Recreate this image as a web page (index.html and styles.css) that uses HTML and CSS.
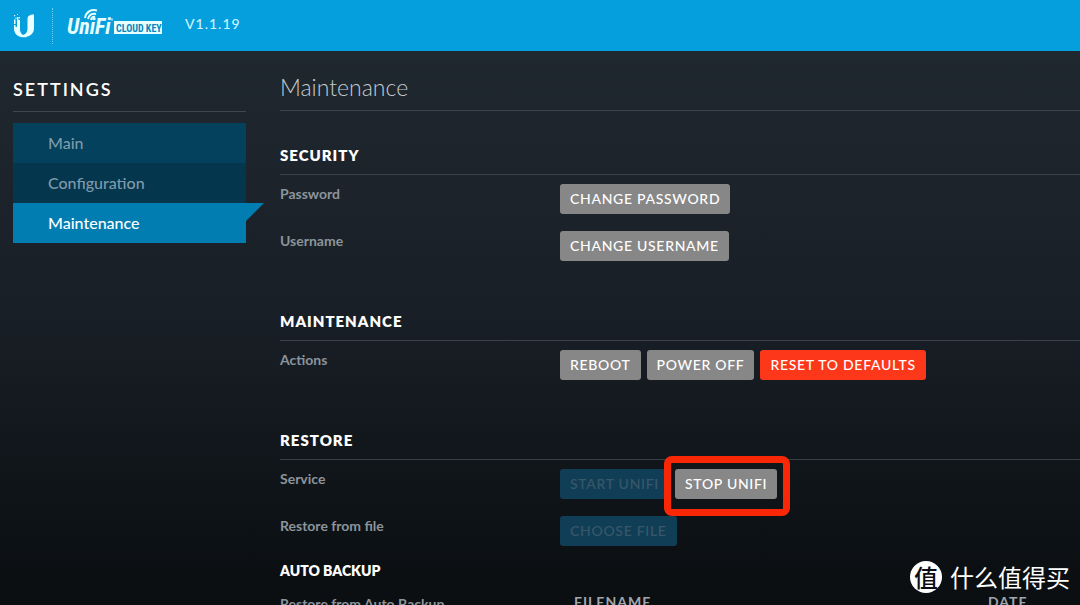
FILE: index.html
```html
<!DOCTYPE html>
<html lang="en">
<head>
<meta charset="utf-8">
<meta name="viewport" content="width=device-width, initial-scale=1">
<title>UniFi Cloud Key</title>
<link rel="stylesheet" href="styles.css">
</head>
<body>
<div class="app">
  <header class="topbar">
    <svg class="mark" viewBox="0 0 24 26" width="24" height="26" aria-hidden="true">
      <path d="M5 4h1.500v3H8v9.500c0 3 1.500 5 4.500 6.500 1 .5 2 .8 3 .9C8 25.500 2 22 2 15.500V12h1.500v2H5z"/>
      <path d="M15.500 6c0-3 2-4.500 6.500-4.500V15c0 5.500-4 9-9.500 9-2 0-4-.6-5.500-2 5 1 8.500-1.500 8.500-6.500z"/>
      <path d="M2 2h1.200v1.200H2zM5 1h1v1H5zM3.500 4.500h1V6h-1zM2 6.500h1.500V11H2zM7 4h1v1.500H7z"/>
    </svg>
    <span class="divider"></span>
    <svg class="logo" viewBox="0 0 96 28" width="96" height="28" role="img" aria-label="UniFi Cloud Key">
      <text class="logo-name" x="0" y="26">UniFi</text>
      <g class="logo-waves">
        <path d="M18 10C19 4 24 1 30 2.500"/>
        <path d="M21 11c1-4 4-6 8-5"/>
        <path d="M24 12c.5-2.500 2-3.500 4-3"/>
      </g>
      <circle class="logo-dot" cx="45" cy="11.500" r="1.200"/>
      <rect class="logo-plate" x="47" y="13" width="48" height="13"/>
      <text class="logo-product" x="49" y="23.500">CLOUD KEY</text>
    </svg>
    <span class="version">V1.1.19</span>
  </header>

  <div class="body">
    <nav class="sidebar" aria-labelledby="settings-title">
      <h2 class="sidebar-title" id="settings-title">SETTINGS</h2>
      <ul class="menu">
        <li><a class="menu-item" href="#main">Main</a></li>
        <li><a class="menu-item menu-item-alt" href="#configuration">Configuration</a></li>
        <li><a class="menu-item menu-item-active" href="#maintenance" aria-current="page">Maintenance</a></li>
      </ul>
    </nav>

    <main class="content">
      <h1 class="page-title">Maintenance</h1>

      <section class="section section-first">
        <h2 class="section-title">SECURITY</h2>
        <div class="row">
          <span class="label">Password</span>
          <div class="actions"><button class="btn" type="button">CHANGE PASSWORD</button></div>
        </div>
        <div class="row">
          <span class="label">Username</span>
          <div class="actions"><button class="btn" type="button">CHANGE USERNAME</button></div>
        </div>
      </section>

      <section class="section">
        <h2 class="section-title">MAINTENANCE</h2>
        <div class="row">
          <span class="label">Actions</span>
          <div class="actions">
            <button class="btn" type="button">REBOOT</button>
            <button class="btn" type="button">POWER OFF</button>
            <button class="btn btn-danger" type="button">RESET TO DEFAULTS</button>
          </div>
        </div>
      </section>

      <section class="section">
        <h2 class="section-title">RESTORE</h2>
        <div class="row">
          <span class="label">Service</span>
          <div class="actions">
            <button class="btn btn-off" type="button" disabled>START UNIFI</button>
            <span class="marked"><button class="btn" type="button">STOP UNIFI</button></span>
          </div>
        </div>
        <div class="row">
          <span class="label">Restore from file</span>
          <div class="actions"><button class="btn btn-off" type="button" disabled>CHOOSE FILE</button></div>
        </div>
        <h3 class="sub-title">AUTO BACKUP</h3>
        <div class="row row-backup">
          <span class="label">Restore from Auto Backup</span>
          <table class="backups">
            <thead><tr><th scope="col">FILENAME</th><th class="col-date" scope="col">DATE</th></tr></thead>
          </table>
        </div>
      </section>
    </main>
  </div>

  <div class="watermark" lang="zh-CN">
    <span class="watermark-badge">值</span>
    <span>什么值得买</span>
  </div>
</div>
</body>
</html>
```
FILE: styles.css
```css
* {
  box-sizing: border-box;
}

body {
  margin: 0;
  background: #0b0f12;
  color: #fff;
  font-family: Lato, "Noto Sans CJK SC", sans-serif;
}

h1, h2, h3, ul {
  margin: 0;
  padding: 0;
}

.app {
  position: relative;
  height: 100vh;
  overflow: hidden;
  background: linear-gradient(#20282f 51px, #181e25 55%, #0b0f12 95%);
}

/* Top bar */
.topbar {
  display: flex;
  align-items: center;
  height: 51px;
  padding-left: 12px;
  background: #069fde;
}

.mark {
  fill: #e8ffff;
}

.divider {
  height: 36px;
  margin: 0 14px 0 16px;
  border-left: 1px dotted #6fd0f4;
}

.logo {
  margin-bottom: 8px;
  overflow: visible;
}

.logo-name {
  fill: #e8ffff;
  font: italic bold 22px "Liberation Sans Narrow", "Roboto Condensed", sans-serif;
}

.logo-waves {
  fill: none;
  stroke: #e8ffff;
  stroke-width: 2;
}

.logo-dot {
  fill: #7cd9f7;
}

.logo-plate {
  fill: #e8ffff;
}

.logo-product {
  fill: #0a86bd;
  font: bold 10px "Liberation Sans Narrow", "Roboto Condensed", sans-serif;
}

.version {
  margin: 0 0 4px 22px;
  color: #c9f3ff;
  font-size: 14px;
  font-weight: 500;
  line-height: 20px;
  letter-spacing: 1px;
}

/* Page columns */
.body {
  display: flex;
  gap: 34px;
  padding-left: 13px;
}

.sidebar {
  flex: 0 0 233px;
}

.sidebar-title {
  margin-bottom: 11px;
  padding: 25px 0 9px;
  border-bottom: 1px solid #3c474f;
  font-size: 18px;
  font-weight: 600;
  line-height: 26px;
  letter-spacing: 2px;
}

.menu {
  list-style: none;
}

.menu-item {
  display: block;
  position: relative;
  padding: 0 35px;
  background: #03415c;
  color: #7f9aaa;
  font-size: 16px;
  font-weight: 500;
  line-height: 40px;
  text-decoration: none;
}

.menu-item-alt {
  background: #04364d;
}

.menu-item-active {
  background: #027db2;
  color: #fff;
}

.menu-item-active::after {
  content: "";
  position: absolute;
  top: 0;
  left: 100%;
  border-top: 18px solid #027db2;
  border-right: 18px solid transparent;
}

/* Main column */
.content {
  flex: 1;
  min-width: 0;
}

.page-title {
  padding: 21px 0 8px;
  border-bottom: 1px solid #3a434b;
  color: #c4cace;
  font-size: 23px;
  font-weight: 300;
  line-height: 30px;
}

.section {
  padding-top: 42px;
}

.section-first {
  padding-top: 34px;
}

.section-title {
  padding-bottom: 9px;
  border-bottom: 1px solid #38414a;
  font-size: 15px;
  font-weight: 800;
  line-height: 20px;
  letter-spacing: 1px;
}

.row {
  display: flex;
  padding: 9px 0 8px;
}

.label {
  flex: 0 0 280px;
  color: #8c949b;
  font-size: 14px;
  font-weight: 700;
  line-height: 20px;
}

.actions {
  display: flex;
  gap: 6px;
}

.btn {
  height: 30px;
  padding: 0 10px;
  border: 0;
  border-radius: 3px;
  background: #878787;
  color: #fff;
  font: 500 14px/30px Lato, sans-serif;
  letter-spacing: 0.05em;
}

.btn-danger {
  background: #fd3719;
}

.btn-off {
  background: #113e57;
  color: #395769;
}

/* Outline drawn over the highlighted button */
.marked {
  position: relative;
}

.marked::after {
  content: "";
  position: absolute;
  inset: -13px -13px -17px -11px;
  border: 7px solid #f82806;
  border-radius: 8px;
  pointer-events: none;
}

.sub-title {
  padding-top: 7px;
  font-size: 14px;
  font-weight: 800;
  line-height: 20px;
}

.row-backup {
  padding-top: 13px;
}

.backups {
  flex: 1;
  border-collapse: collapse;
  color: #a0a6ab;
  font-size: 14px;
  line-height: 16px;
  letter-spacing: 1px;
}

.backups th {
  padding: 0 0 0 14px;
  text-align: left;
  vertical-align: top;
}

.backups .col-date {
  width: 106px;
}

/* Watermark over the page corner */
.watermark {
  display: flex;
  position: absolute;
  right: 10px;
  bottom: 12px;
  align-items: center;
  gap: 8px;
  font: 24px/32px "Noto Sans CJK SC", sans-serif;
}

.watermark-badge {
  width: 32px;
  border-radius: 50%;
  background: #fff;
  color: #0b0f12;
  font-weight: 500;
  text-align: center;
}
```
